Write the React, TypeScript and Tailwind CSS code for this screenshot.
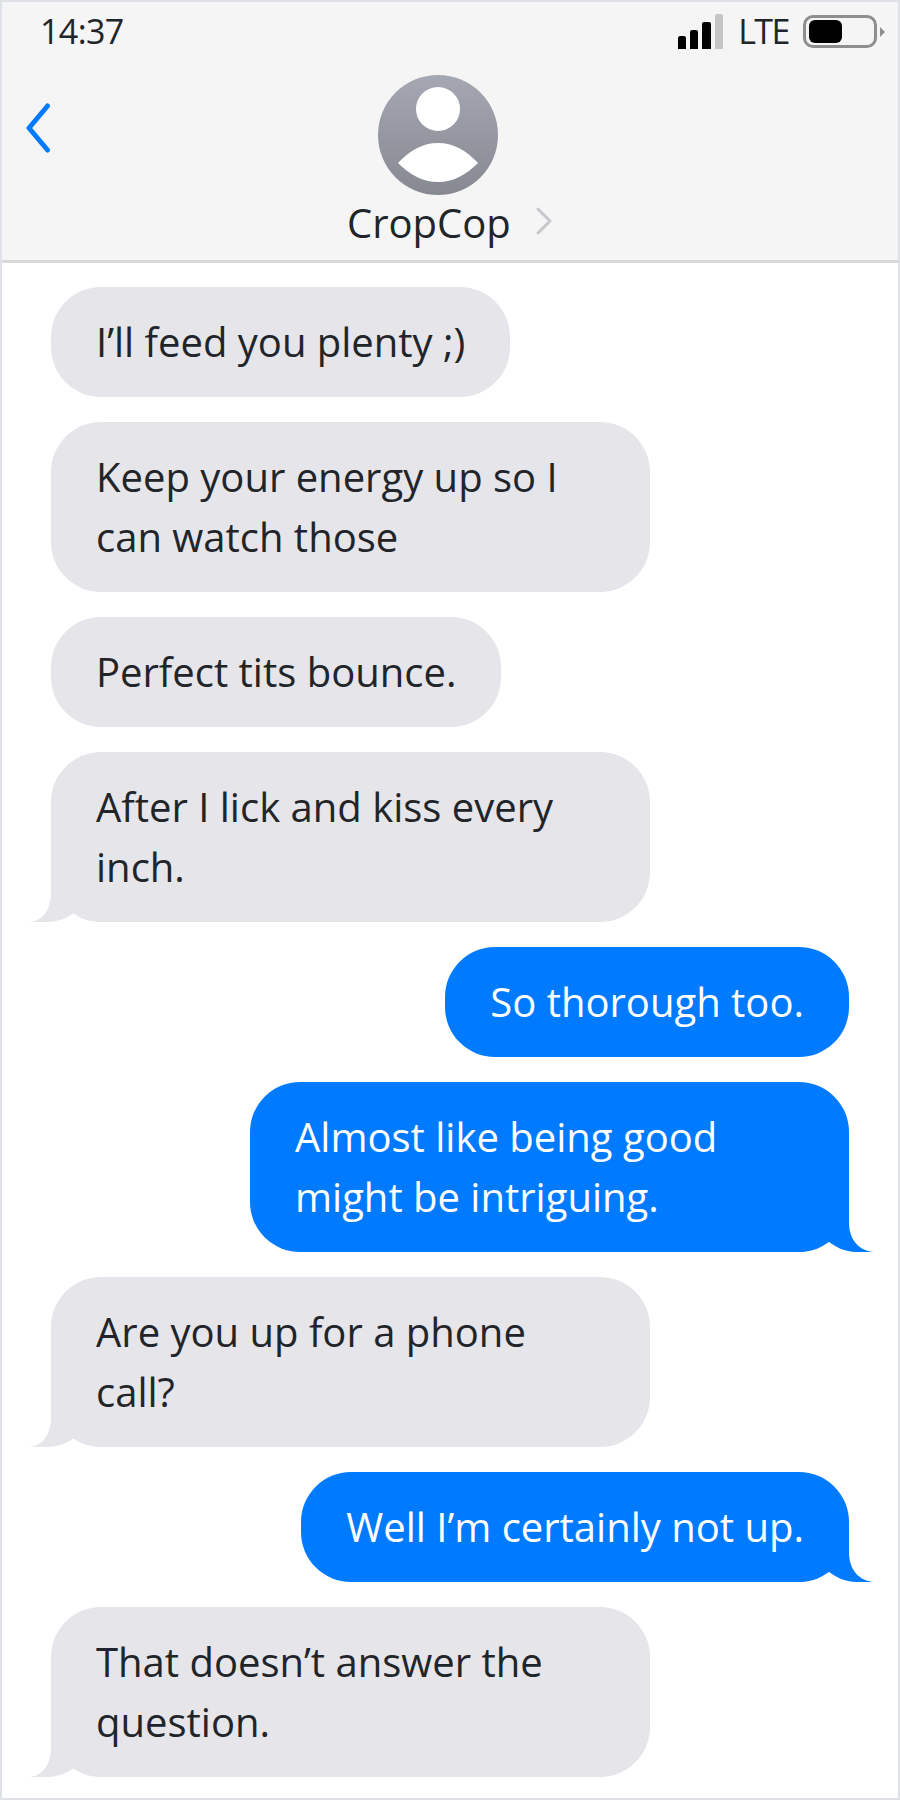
import React from "react";

type Message = { text: string[]; mine?: boolean; tail?: boolean };

const messages: Message[] = [
  { text: ["I’ll feed you plenty ;)"] },
  { text: ["Keep your energy up so I", "can watch those"] },
  { text: ["Perfect tits bounce."] },
  { text: ["After I lick and kiss every", "inch."], tail: true },
  { text: ["So thorough too."], mine: true },
  { text: ["Almost like being good", "might be intriguing."], mine: true, tail: true },
  { text: ["Are you up for a phone", "call?"], tail: true },
  { text: ["Well I’m certainly not up."], mine: true, tail: true },
  { text: ["That doesn’t answer the", "question."], tail: true },
];

const TailLeft = () => (
  <svg className="absolute bottom-0 left-[-22px]" width="80" height="60" viewBox="0 0 80 60">
    <path d="M0 60C13 59 22 49 22 30V8H72V60C64 60 55 56 47 49C40 56 28 60 18 60Z" fill="#e5e5ea" />
  </svg>
);

const TailRight = () => (
  <svg className="absolute right-[-25px] bottom-0" width="80" height="60" viewBox="0 0 80 60">
    <path d="M80 60C66 59 55 49 55 30V8H5V60C14 60 24 56 33 48C40 55 52 60 62 60Z" fill="#007aff" />
  </svg>
);

const Bubble = ({ text, mine, tail }: Message) => (
  <div className={mine ? "flex justify-end pr-[49px]" : "flex justify-start pl-[49px]"}>
    <div
      className={
        (text.length > 1 ? "w-[599px] " : "") +
        (mine
          ? "relative rounded-[50px] bg-[#007aff] px-[45px] py-[25px] text-[40px] leading-[60px] text-white"
          : "relative rounded-[50px] bg-[#e5e5ea] px-[45px] py-[25px] text-[40px] leading-[60px] text-[#212529]")
      }
    >
      {tail && (mine ? <TailRight /> : <TailLeft />)}
      <div className="relative whitespace-nowrap">
        {text.map((line) => (
          <div key={line}>{line}</div>
        ))}
      </div>
    </div>
  </div>
);

const StatusBar = () => (
  <div className="flex h-[60px] items-center justify-between border-b border-[#f7f7f7] pl-[38px] pr-[13px]">
    <span className="text-[34px] tracking-[-0.6px] text-[#212529]">14:37</span>
    <div className="flex items-center">
      <div className="flex items-end gap-[4px]">
        <div className="h-[13px] w-[8px] rounded-t-[2px] bg-black" />
        <div className="h-[19px] w-[8px] rounded-t-[2px] bg-black" />
        <div className="h-[27px] w-[9px] rounded-t-[2px] bg-black" />
        <div className="h-[35px] w-[8px] rounded-t-[2px] bg-[#c6c6c6]" />
      </div>
      <span className="ml-[15px] text-[34px] tracking-[-1.5px] text-[#212529]">LTE</span>
      <div className="ml-[14px] flex h-[33px] w-[74px] items-center rounded-[10px] border-[3px] border-[#8e8e8e] px-[3px]">
        <div className="h-[23px] w-[33px] rounded-[6px] bg-black" />
      </div>
      <svg className="ml-[3px]" width="5" height="10" viewBox="0 0 5 10">
        <path d="M0 0L5 5L0 10Z" fill="#8e8e8e" />
      </svg>
    </div>
  </div>
);

const Avatar = () => (
  <svg width="120" height="120" viewBox="0 0 120 120">
    <defs>
      <linearGradient id="avatarFill" x1="0" y1="0" x2="0" y2="1">
        <stop offset="0" stopColor="#a5a8b3" />
        <stop offset="1" stopColor="#868991" />
      </linearGradient>
    </defs>
    <circle cx="60" cy="60" r="60" fill="url(#avatarFill)" />
    <circle cx="60" cy="34" r="22" fill="#fff" />
    <path d="M20 88C32 75 45 68 60 68C75 68 88 75 100 88C88 100 75 107 60 107C45 107 32 100 20 88Z" fill="#fff" />
  </svg>
);

const Header = () => (
  <header className="border-b-[3px] border-[#d8d8d8] bg-[#f5f5f5]">
    <StatusBar />
    <div className="flex h-[132px] items-center border-b border-[#f7f7f7] pl-[24px]">
      <svg width="28" height="50" viewBox="0 0 28 50" fill="none">
        <path d="M21.5 3L3 25L21.5 47" stroke="#007aff" strokeWidth="5" strokeLinecap="round" strokeLinejoin="round" />
      </svg>
      <div className="ml-[324px] self-start pt-[13px]">
        <Avatar />
      </div>
    </div>
    <div className="flex h-[66px] items-start pl-[345px] pt-[7px]">
      <span className="text-[40px] leading-[44px] text-[#212529]">CropCop</span>
      <svg className="ml-[24px] mt-[5px]" width="18" height="30" viewBox="0 0 18 30" fill="none">
        <path d="M3 3L15 15L3 27" stroke="#c7c7cc" strokeWidth="3" strokeLinecap="round" strokeLinejoin="round" />
      </svg>
    </div>
  </header>
);

export default function App() {
  return (
    <div className="h-[1800px] w-[900px] overflow-hidden border-2 border-[#dee2e6] bg-white font-['Open_Sans',sans-serif]">
      <Header />
      <main className="flex flex-col gap-[25px] pt-[24px]">
        {messages.map((message) => (
          <Bubble key={message.text[0]} {...message} />
        ))}
      </main>
    </div>
  );
}
